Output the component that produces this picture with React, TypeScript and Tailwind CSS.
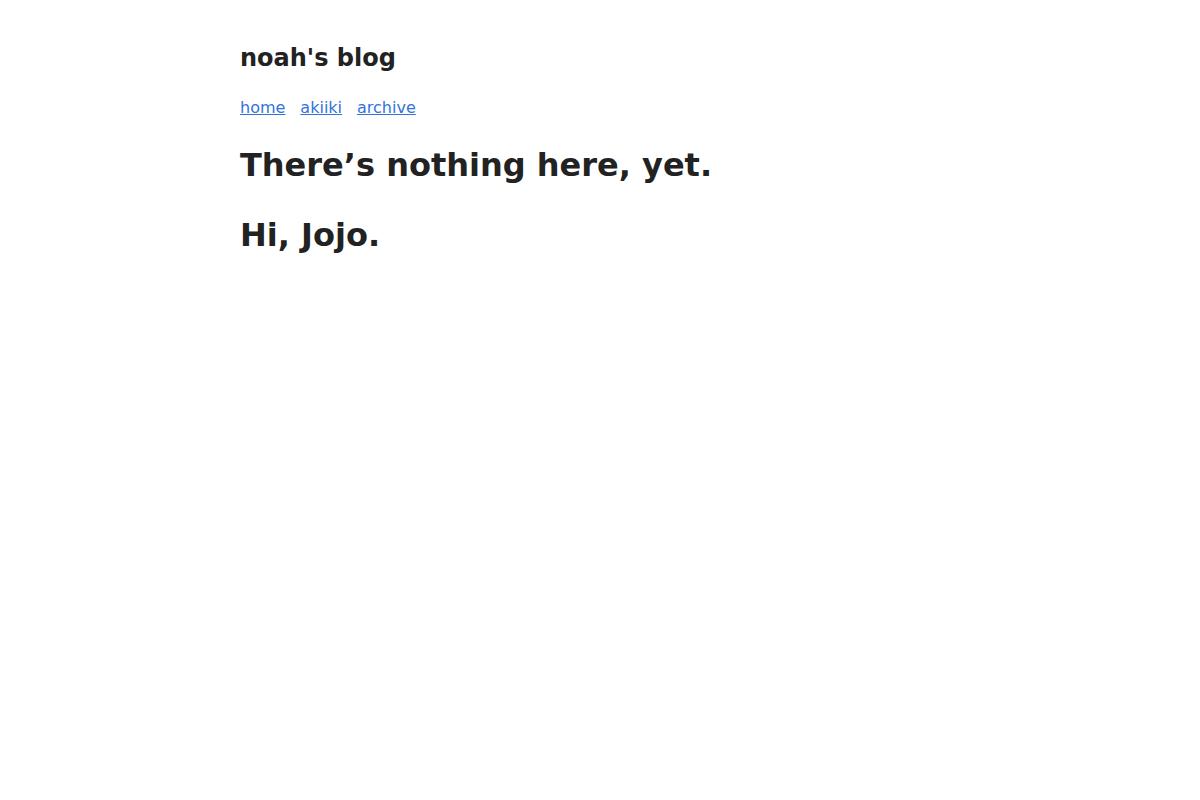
export default function App() {
  return (
    <div className="min-h-screen bg-white text-[#222] font-['DejaVu_Sans',sans-serif]">
      <div className="mx-auto max-w-[720px] pt-[44px]">
        <header>
          <h1 className="text-[24px] font-bold leading-[28px]">noah's blog</h1>
          <nav className="mt-[26px] flex gap-[15px] text-[16px] leading-[19px]">
            <a href="#" className="text-[#3273dc] underline">home</a>
            <a href="#" className="text-[#3273dc] underline">akiiki</a>
            <a href="#" className="text-[#3273dc] underline">archive</a>
          </nav>
        </header>
        <main className="mt-[30px] flex flex-col gap-[33px]">
          <h2 className="text-[32px] font-bold leading-[37px]">There’s nothing here, yet.</h2>
          <h2 className="text-[32px] font-bold leading-[37px]">Hi, Jojo.</h2>
        </main>
      </div>
    </div>
  );
}
